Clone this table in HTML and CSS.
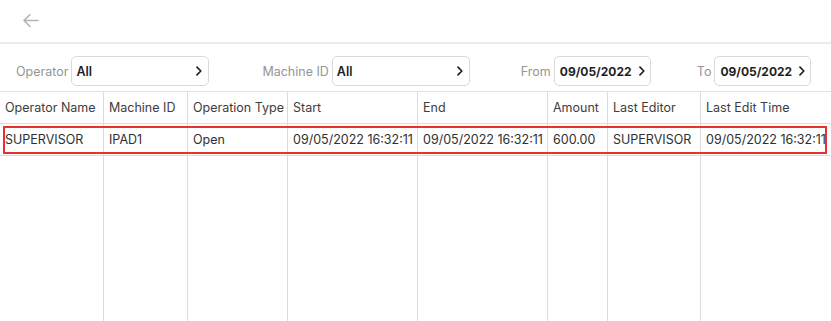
FILE: index.html
```html
<!DOCTYPE html>
<html>
<head>
<meta charset="utf-8">
<link rel="stylesheet" href="styles.css">
</head>
<body>
<div class="page">
  <header class="topbar">
    <svg class="back" width="17" height="15" viewBox="0 0 17 15"><path d="M16 7.5H2M8 1.5L2 7.5L8 13.5" fill="none" stroke="#b4b4b4" stroke-width="1.6" stroke-linecap="round" stroke-linejoin="round"/></svg>
  </header>
  <div class="filters">
    <div class="fgroup g-op">
      <span class="flabel">Operator</span>
      <div class="fbox w-sel"><span class="fval">All</span><svg class="chev" width="6" height="10" viewBox="0 0 6 10"><path d="M1 1.2L4.8 5L1 8.8" fill="none" stroke="#222" stroke-width="1.7" stroke-linecap="round" stroke-linejoin="round"/></svg></div>
    </div>
    <div class="fgroup g-mid">
      <span class="flabel">Machine ID</span>
      <div class="fbox w-sel"><span class="fval">All</span><svg class="chev" width="6" height="10" viewBox="0 0 6 10"><path d="M1 1.2L4.8 5L1 8.8" fill="none" stroke="#222" stroke-width="1.7" stroke-linecap="round" stroke-linejoin="round"/></svg></div>
    </div>
    <div class="fgroup g-from">
      <span class="flabel">From</span>
      <div class="fbox w-date"><span class="fval date">09/05/2022</span><svg class="chev" width="6" height="10" viewBox="0 0 6 10"><path d="M1 1.2L4.8 5L1 8.8" fill="none" stroke="#222" stroke-width="1.7" stroke-linecap="round" stroke-linejoin="round"/></svg></div>
    </div>
    <div class="fgroup g-to">
      <span class="flabel">To</span>
      <div class="fbox w-date"><span class="fval date">09/05/2022</span><svg class="chev" width="6" height="10" viewBox="0 0 6 10"><path d="M1 1.2L4.8 5L1 8.8" fill="none" stroke="#222" stroke-width="1.7" stroke-linecap="round" stroke-linejoin="round"/></svg></div>
    </div>
  </div>
  <div class="grid">
    <div class="cell head">Operator Name</div>
    <div class="cell head">Machine ID</div>
    <div class="cell head">Operation Type</div>
    <div class="cell head">Start</div>
    <div class="cell head">End</div>
    <div class="cell head">Amount</div>
    <div class="cell head">Last Editor</div>
    <div class="cell head last">Last Edit Time</div>

    <div class="cell row">SUPERVISOR</div>
    <div class="cell row">IPAD1</div>
    <div class="cell row">Open</div>
    <div class="cell row">09/05/2022 16:32:11</div>
    <div class="cell row">09/05/2022 16:32:11</div>
    <div class="cell row">600.00</div>
    <div class="cell row">SUPERVISOR</div>
    <div class="cell row last">09/05/2022 16:32:11</div>

    <div class="cell fill"></div>
    <div class="cell fill"></div>
    <div class="cell fill"></div>
    <div class="cell fill"></div>
    <div class="cell fill"></div>
    <div class="cell fill"></div>
    <div class="cell fill"></div>
    <div class="cell fill last"></div>

    <div class="highlight"></div>
  </div>
</div>
</body>
</html>
```
FILE: styles.css
```css
* { box-sizing: border-box; }
html, body { margin: 0; padding: 0; background: #fff; }
body {
  font-family: "Inter", "Liberation Sans", sans-serif;
  font-size: 12px;
  color: #2b2b2b;
}
.page {
  height: 321px;
  display: flex;
  flex-direction: column;
  overflow: hidden;
}
.topbar {
  height: 44px;
  flex: none;
  border-bottom: 2px solid #ebebeb;
  display: flex;
  align-items: flex-start;
  padding: 13px 0 0 22px;
}
.back { display: block; }
.filters {
  flex: none;
  height: 48px;
  display: flex;
  align-items: flex-start;
  padding-top: 12px;
  border-bottom: 1px solid #e2e2e2;
}
.fgroup {
  display: flex;
  align-items: center;
  gap: 3px;
}
.g-op { margin-left: 16px; }
.g-mid { margin-left: 53px; }
.g-from { margin-left: 51px; }
.g-to { margin-left: 46px; }
.flabel {
  color: #959595;
  font-size: 12.5px;
}
.fbox {
  height: 30px;
  border: 1px solid #d9d9d9;
  border-radius: 5px;
  display: flex;
  align-items: center;
  padding: 0 5px 0 4px;
}
.w-sel { width: 138px; justify-content: space-between; padding-right: 6px; }
.w-date { width: 97px; padding-left: 5px; gap: 7px; }
.fval {
  font-weight: 600;
  color: #1f1f1f;
  font-size: 12.5px;
}
.fval.date { font-weight: 700; font-size: 12px; }
.chev { display: block; flex: none; }
.grid {
  flex: 1;
  position: relative;
  display: grid;
  grid-template-columns: 104px 84px 100px 130px 130px 60px 93px 1fr;
  grid-template-rows: 32px 32px 1fr;
}
.cell {
  border-right: 1px solid #dcdcdc;
  display: flex;
  align-items: center;
  padding-left: 5px;
  white-space: nowrap;
  font-size: 12.5px;
  color: #333;
}
.cell.last { border-right: none; }
.head { border-bottom: 1px solid #dcdcdc; color: #3d3d3d; }
.row { border-bottom: 1px solid #dcdcdc; color: #2f2f2f; }
.highlight {
  position: absolute;
  left: 3px;
  top: 34px;
  width: 824px;
  height: 28px;
  border: 2px solid #e8302c;
  pointer-events: none;
}
```
